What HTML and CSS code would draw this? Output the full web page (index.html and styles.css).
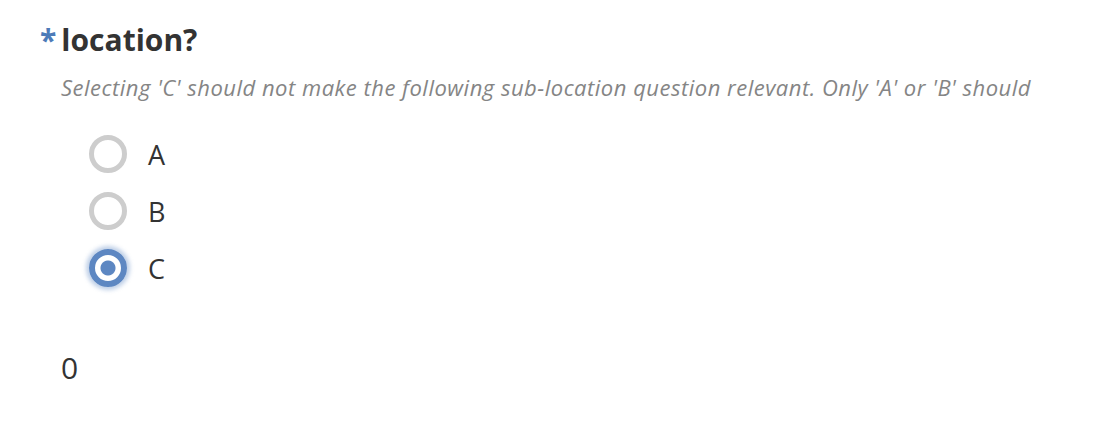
FILE: index.html
```html
<!DOCTYPE html>
<html lang="en">
<head>
  <meta charset="UTF-8">
  <title>location?</title>
  <link rel="stylesheet" href="styles.css">
</head>
<body>
  <div class="question">
    <h2 class="question-title"><span class="required">*</span>location?</h2>
    <p class="hint">Selecting 'C' should not make the following sub-location question relevant. Only 'A' or 'B' should</p>
    <div class="options">
      <label class="option"><input type="radio" name="location" value="a"><span class="radio"></span>A</label>
      <label class="option"><input type="radio" name="location" value="b"><span class="radio"></span>B</label>
      <label class="option"><input type="radio" name="location" value="c" checked><span class="radio"></span>C</label>
    </div>
  </div>
  <div class="output">0</div>
</body>
</html>
```

FILE: styles.css
```css
body {
  font-family: "Open Sans", sans-serif;
  color: #333;
  margin: 0;
  padding: 20px 0 0 40px;
  background: #fff;
}

.question-title {
  font-size: 30px;
  font-weight: 700;
  margin: 0;
  line-height: 40px;
  display: flex;
  align-items: baseline;
}

.required {
  color: #4d7bb8;
  margin-right: 5px;
}

.hint {
  font-size: 22px;
  font-style: italic;
  letter-spacing: 0.5px;
  color: #858585;
  margin: 12px 0 0 21px;
  line-height: 30px;
}

.options {
  display: flex;
  flex-direction: column;
  gap: 19px;
  margin: 33px 0 0 49px;
}

.option {
  display: flex;
  align-items: center;
  gap: 21px;
  font-size: 27px;
  height: 38px;
}

.option input {
  display: none;
}

.radio {
  width: 38px;
  height: 38px;
  box-sizing: border-box;
  border-radius: 50%;
  border: 5px solid #cdcdcd;
  background: #fff;
}

.option input:checked + .radio {
  border: 6px solid #5d87c2;
  background: radial-gradient(circle, #5d87c2 0 7px, #fff 8px);
  box-shadow: 0 0 4px 3px rgba(93, 135, 194, 0.4);
}

.output {
  font-size: 30px;
  margin: 60px 0 0 21px;
}
```
